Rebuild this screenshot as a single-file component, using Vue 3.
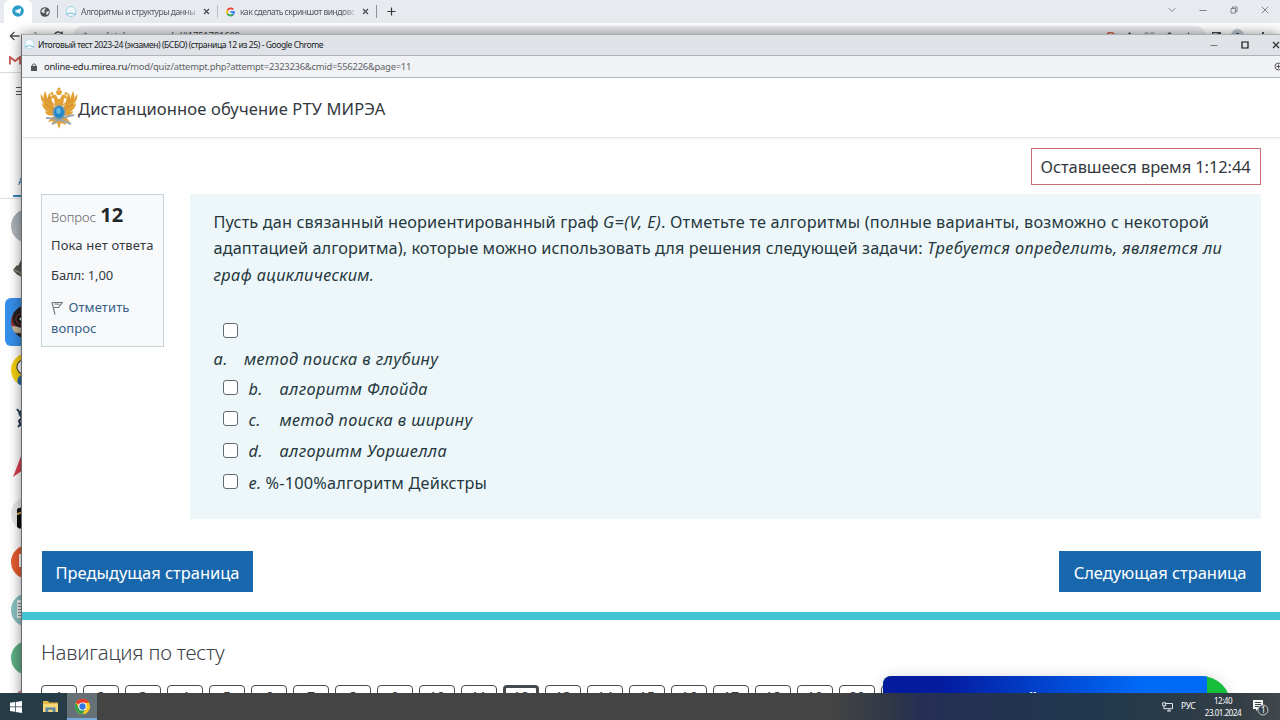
<script setup>
const answers = [
  { key: 'b.', text: 'алгоритм Флойда' },
  { key: 'c.', text: 'метод поиска в ширину' },
  { key: 'd.', text: 'алгоритм Уоршелла' },
]
const pages = Array.from({ length: 21 }, (_, i) => i + 1)
</script>

<template>
  <div class="screen">
    <div class="browser">
      <div class="tabs">
        <div class="tab-active">
          <svg width="12" height="12" viewBox="0 0 12 12"><circle cx="6" cy="6" r="5.8" fill="#2c9cc9" /><path d="M2.3 6l6.8-2.7L8 9 5.8 7.4 4.8 8.5 4.5 6.9z" fill="#fff" /></svg>
        </div>
        <svg class="globe" width="10" height="10" viewBox="0 0 10 10"><circle cx="5" cy="5" r="4.8" fill="#505356" /><path d="M2 3l2-1.8 1.8.6L5 3.3l-1.2.5L5 5l-1 1.4L1 4.6zM6.2 4.8l2.5-.9.3 1.7L7.3 8l-1-.4z" fill="#dfe2e6" /></svg>
        <i class="sep s1"></i>
        <svg class="fav" width="12" height="12" viewBox="0 0 12 12"><circle cx="6" cy="5.5" r="5" fill="#f0f7fb" stroke="#9ed2e6" /><path d="M1 8.5q5-3 10 .3" fill="none" stroke="#71b9d7" /></svg>
        <span class="tab-text t1">Алгоритмы и структуры данны</span>
        <svg class="x" width="7" height="7" viewBox="0 0 7 7"><path d="M1 1l5 5M6 1L1 6" stroke="#46494d" stroke-width="1.2" /></svg>
        <i class="sep s2"></i>
        <svg class="google" width="9" height="10" viewBox="0 0 18 18"><g fill="none" stroke-width="3.6"><path d="M14.5 4A7 7 0 0 0 3 5.6" stroke="#ea4335" /><path d="M3 5.6A7 7 0 0 0 3 12.4" stroke="#fbbc05" /><path d="M3 12.4A7 7 0 0 0 14 14" stroke="#34a853" /><path d="M14 14A7 7 0 0 0 16 9H9" stroke="#4285f4" /></g></svg>
        <span class="tab-text t2">как сделать скриншот виндовс</span>
        <svg class="x" width="7" height="7" viewBox="0 0 7 7"><path d="M1 1l5 5M6 1L1 6" stroke="#46494d" stroke-width="1.2" /></svg>
        <i class="sep s3"></i>
        <svg class="plus" width="9" height="9" viewBox="0 0 9 9"><path d="M4.5 .5v8M.5 4.5h8" stroke="#35383b" stroke-width="1.2" /></svg>
        <div class="back-controls">
          <svg width="8" height="8" viewBox="0 0 8 8"><path d="M.7 2.2L4 5.5l3.3-3.3" /></svg>
          <svg width="8" height="8" viewBox="0 0 8 8"><path d="M.5 4.5h7" /></svg>
          <svg width="8" height="8" viewBox="0 0 8 8"><path d="M1 2.5h4.5V7H1zM2.5 2.5V1H7v4.5H5.5" /></svg>
          <svg width="8" height="8" viewBox="0 0 8 8"><path d="M.8 .8l6.4 6.4M7.2 .8L.8 7.2" /></svg>
        </div>
      </div>
      <div class="toolbar">
        <svg class="back" width="11" height="10" viewBox="0 0 11 10"><path d="M10.5 5H1.4M5.4 1L1.3 5l4.1 4" fill="none" stroke="#4b4e52" stroke-width="1.3" /></svg>
        <svg class="forward" width="11" height="10" viewBox="0 0 11 10"><path d="M0 5h9.6M5.4 1l4.1 4-4.1 4" fill="none" stroke="#94979a" stroke-width="1.2" /></svg>
        <svg class="reload" width="10" height="10" viewBox="0 0 10 10"><path d="M9 3.5A4 4 0 1 0 9 6.5M9.2 .5v3.3H6" fill="none" stroke="#4b4e52" stroke-width="1.4" /></svg>
        <div class="omnibox"><svg width="7" height="9" viewBox="0 0 7 9"><path d="M1 4h5v4H1zM2 4V2q1.5-2 3 0v2" fill="none" stroke="#5f6368" /></svg><span>web.telegram.org/a/#1751781600</span></div>
        <div class="extensions">
          <svg width="9" height="9" viewBox="0 0 9 9"><path d="M8 2.5A4 4 0 1 0 8 6.5" fill="none" stroke="#d35e42" stroke-width="1.6" /></svg>
          <svg width="9" height="9" viewBox="0 0 9 9"><path d="M4.5 0L8 4H6v4H3V4H1z" fill="#4c4f53" /></svg>
          <svg width="11" height="9" viewBox="0 0 11 9"><path d="M1 1h3v3H1zM6 1h4v2M6 5h4v3" fill="none" stroke="#8e9194" /></svg>
          <svg width="9" height="9" viewBox="0 0 9 9"><path d="M4.5 0L9 4H7v4H2V4H0z" fill="#4c4f53" /></svg>
          <svg width="9" height="9" viewBox="0 0 9 9"><path d="M4.5 0l1.3 3H9L6.5 5l1 3-3-2-3 2 1-3L0 3h3z" fill="#54575b" /></svg>
          <svg class="panel" width="9" height="9" viewBox="0 0 9 9"><path d="M.7 .7h7.6v6H.7zM6 1v6M7 1v6" fill="none" stroke="#414449" stroke-width="1.3" /></svg>
          <b class="avatar"></b>
          <b class="dots"></b>
        </div>
      </div>
      <svg class="gmail" width="12" height="9" viewBox="0 0 12 9"><path d="M1 8.5V1l5 4 5-4v7.5" fill="none" stroke="#c7574d" stroke-width="1.8" /></svg>
      <div class="bookmark-line"></div>
      <div class="menu-icon"></div>
      <div class="folder">А</div>
      <div class="chats">
        <div class="chat"><i class="face gray"></i></div>
        <div class="chat"><svg class="hat" width="32" height="26" viewBox="0 0 32 26"><path d="M2 13l4-5 1 1 3-6q6-5 12 0l9 12-14 8-4 2-2-5Q5 18 2 13z" fill="#57584d" /><path d="M3 13q6 1 9 6" stroke="#aaa994" fill="none" /></svg></div>
        <div class="chat selected"><i class="face helmet"></i></div>
        <div class="chat"><i class="face yellow"></i></div>
        <div class="chat"><svg width="30" height="34" viewBox="0 0 30 34"><path d="M6 8l3 4 2-3M8 12l3 5-3 3 2 5M7 26l4-5" fill="none" stroke="#253b57" stroke-width="2" /></svg></div>
        <div class="chat"><svg width="30" height="34" viewBox="0 0 30 34"><path d="M2 28L12 2l12 24-12-5z" fill="#d94152" /></svg></div>
        <div class="chat"><i class="face black"></i></div>
        <div class="chat"><i class="face orange"><b></b></i></div>
        <div class="chat"><i class="face teal"><b></b></i></div>
        <div class="chat"><i class="face green"></i></div>
        <div class="chat"><i class="face pink"></i></div>
      </div>
    </div>

    <section class="window">
      <div class="titlebar">
        <svg width="11" height="11" viewBox="0 0 12 12"><circle cx="6" cy="5.5" r="5" fill="#f5fbff" stroke="#b1dceb" /><path d="M1 8.5q5-3 10 .3" fill="none" stroke="#71b9d7" /></svg>
        <span>Итоговый тест 2023-24 (экзамен) (БСБО) (страница 12 из 25) - Google Chrome</span>
        <div class="controls">
          <svg width="8" height="8" viewBox="0 0 8 8"><path d="M.5 4.5h7" stroke="#777" /></svg>
          <svg width="8" height="8" viewBox="0 0 8 8"><path d="M1 1h6v6H1z" fill="none" stroke="#111" stroke-width="1.2" /></svg>
          <svg width="8" height="8" viewBox="0 0 8 8"><path d="M1 1l6 6M7 1L1 7" stroke="#333" stroke-width="1.3" /></svg>
        </div>
      </div>
      <div class="address">
        <svg width="6" height="8" viewBox="0 0 6 8"><path d="M0 3h6v5H0z" fill="#515458" /><path d="M1.2 3V2q1.8-2.6 3.6 0v1" fill="none" stroke="#515458" /></svg>
        <span><b>online-edu.mirea.ru</b>/mod/quiz/attempt.php?attempt=2323236&amp;cmid=556226&amp;page=11</span>
        <svg class="zoom" width="9" height="9" viewBox="0 0 9 9"><circle cx="4.5" cy="4.5" r="3.5" fill="none" stroke="#555" /><path d="M2.5 4.5h4M4.5 2.5v4" stroke="#555" /></svg>
      </div>
      <header>
        <svg class="eagle" width="38" height="42" viewBox="0 0 38 42">
          <g fill="#e4a236">
            <path d="M14 21v7C8 30 5 26 5 24l3 1C3 22 2 18 2 16l3 2C1 14 0 9 1 7l3 5C3 9 4 6 5 4l3 8c0-3 0-5 2-6l2 9 3 5zM24 21v7c6 2 9-2 9-4l-3 1c5-3 6-7 6-9l-3 2c4-4 5-9 4-11l-3 5c1-3 0-6-1-8l-3 8c0-3 0-5-2-6l-2 9-3 5z" />
            <path d="M11 12q0-5 5-4l2 4h2l2-4q5-1 5 4l-3-1-1 8h-8l-1-8zM16 5l1-2 2 1 2-1 1 2-1 3h-4z" />
            <circle cx="19" cy="2" r="1.6" /><circle cx="12" cy="6.5" r="1.5" /><circle cx="26" cy="6.5" r="1.5" />
            <path d="M12 30l-4 5 5-1-1 4 5-2 2 6 2-6 5 2-1-4 5 1-4-5z" />
          </g>
          <path d="M4 11l9 7M5 17l8 5M34 11l-9 7M33 17l-8 5M8 10l7 8M30 10l-7 8" stroke="#c98327" stroke-width=".7" />
          <path d="M6 31q12 0 25 6M34 28q-12 2-22 9" fill="none" stroke="#9aa3aa" stroke-width="2" />
          <ellipse cx="19" cy="25.5" rx="6.6" ry="7.6" fill="#8f999a" /><ellipse cx="19" cy="25.3" rx="5" ry="6.1" fill="#2389c9" />
          <ellipse cx="18.5" cy="24" rx="2.2" ry="3" fill="#66b9e2" />
        </svg>
        <h1>Дистанционное обучение РТУ МИРЭА</h1>
      </header>
      <main>
        <div class="timer"><span>Оставшееся время 1:12:44</span></div>
        <div class="question">
          <aside>
            <div class="qno">Вопрос <b>12</b></div>
            <div class="state">Пока нет ответа</div>
            <div class="grade">Балл: 1,00</div>
            <div class="flag"><svg width="13" height="14" viewBox="0 0 13 14"><path d="M1 1.5l3 12M1.2 1.5h10L7.5 6.5H3M3.5 3l5 .2" fill="none" stroke="#6d7379" stroke-width="1.1" /></svg> <span>Отметить<br></span><span>вопрос</span></div>
          </aside>
          <article>
            <p>
              <span>Пусть дан связанный неориентированный граф <em>G=(V, E)</em>.<span class="wide"> Отметьте те алгоритмы (полные варианты, возможно с некоторой</span></span><br>
              <span class="second">адаптацией алгоритма), которые можно использовать для решения следующей задачи: <em>Требуется определить, является ли</em></span><br>
              <em>граф ациклическим.</em>
            </p>
            <div class="first-box"><i class="check"></i></div>
            <div class="first-label"><em class="letter">a.</em><em>метод поиска в глубину</em></div>
            <div v-for="a in answers" :key="a.key" class="answer"><i class="check"></i><em class="letter">{{ a.key }}</em><em>{{ a.text }}</em></div>
            <div class="answer last"><i class="check"></i><em>e.</em><span>%-100%алгоритм Дейкстры</span></div>
          </article>
        </div>
        <div class="buttons"><button class="prev">Предыдущая страница</button><button class="next">Следующая страница</button></div>
      </main>
      <div class="stripe"></div>
      <nav>
        <h2>Навигация по тесту</h2>
        <div class="pages"><span v-for="n in pages" :key="n" :class="{ current: n === 12 }">{{ n }}</span></div>
      </nav>
    </section>

    <div class="banner"><div class="banner-blue">Й</div></div>

    <footer>
      <div class="start"><svg width="12" height="12" viewBox="0 0 12 12"><path d="M0 1.8l5-.7v4.5H0zM5.7 1L12 0v5.6H5.7zM0 6.3h5v4.5l-5-.7zM5.7 6.3H12V12l-6.3-1z" fill="#fff" /></svg></div>
      <div class="explorer"><svg width="15" height="13" viewBox="0 0 15 13"><path d="M0 1h5l1 1.5h9V12H0z" fill="#e2b94a" /><path d="M0 4h15v8H0z" fill="#f5d777" /><path d="M2.5 12V7.5h10V12h-2.8V9.7H5.3V12z" fill="#5a86a5" /></svg></div>
      <div class="chrome"><svg width="17" height="17" viewBox="0 0 20 20"><circle cx="10" cy="10" r="9" fill="#fbc927" /><path d="M10 10L2.2 5.5A9 9 0 0 1 17.8 5.5H10z" fill="#e53a2c" /><path d="M2.2 5.5A9 9 0 0 0 10 19l4-7-4 2-4-2z" fill="#3a9e4e" /><circle cx="10" cy="10" r="4.8" fill="#fff" /><circle cx="10" cy="10" r="3.7" fill="#3176e4" /></svg></div>
      <div class="tray">
        <svg class="net" width="12" height="10" viewBox="0 0 12 10"><path d="M3.5 1.5h7v5.2H2.3M5 9h4M7 7v2M.7 .8h3v3h-3zM2 4v3" fill="none" stroke="#e5e8ea" /></svg>
        <span class="lang">РУС</span>
        <div class="clock"><span>12:40</span><span>23.01.2024</span></div>
        <div class="notice"><svg width="18" height="17" viewBox="0 0 18 17"><path d="M1 1h10v9H6l-2 2v-2H1z" fill="#f4f5f5" /><path d="M3 3.5h6M3 5.5h6M3 7.5h4" stroke="#38424a" /><circle cx="11" cy="11" r="5" fill="#38424a" stroke="#c3c6c9" /></svg><b>1</b></div>
      </div>
    </footer>
  </div>
</template>

<style>
html, body { margin: 0; overflow: hidden; }
</style>
<style scoped>
* { box-sizing: border-box; }
.screen { position: relative; width: 1280px; height: 720px; overflow: hidden; background: #fff; font-family: "Noto Sans", sans-serif; color: #33393e; }
svg { display: block; flex: none; }
.browser { height: 720px; }
.tabs { height: 23px; display: flex; align-items: center; background: #e7eaee; }
.tab-active { width: 28px; height: 23px; margin-left: 4px; padding: 5px 0 0 8px; background: #fff; border-radius: 6px 6px 0 0; }
.globe { margin-left: 8px; }
.sep { width: 1px; height: 13px; background: #8e9296; }
.s1 { margin-left: 7px; }
.fav { margin-left: 7px; }
.tab-text { flex: none; font-size: 8.6px; line-height: 14px; white-space: nowrap; color: #55595d; mask-image: linear-gradient(90deg, #000 90%, #0004); }
.t1 { width: 116px; margin-left: 4px; letter-spacing: -.52px; }
.t2 { width: 114px; margin-left: 5px; letter-spacing: -.52px; }
.x { margin-left: 6px; }
.t2 + .x { margin-left: 8px; }
.s2 { margin-left: 7px; background: #bbbfc3; }
.google { margin-left: 8px; }
.s3 { margin-left: 7px; }
.plus { margin-left: 10px; }
.back-controls { margin-left: auto; display: flex; gap: 23px; padding: 0 11px 4px 0; }
.back-controls path { fill: none; stroke: #75797c; stroke-width: .9; }
.toolbar { height: 27px; display: flex; padding-top: 2px; background: #fff; }
.back { margin: 6px 0 0 9px; }
.forward { margin: 6px 0 0 9px; }
.reload { margin: 6px 0 0 13px; }
.omnibox { display: flex; width: 1133px; height: 22px; margin: 1px 0 0 10px; padding: 3px 9px; border-radius: 11px; background: #e9ebee; font-size: 9.5px; line-height: 13px; gap: 5px; color: #36393c; letter-spacing: -.22px; }
.omnibox svg { margin-top: 3px; }
.extensions { position: absolute; left: 1106px; top: 32px; display: flex; gap: 10px; }
.extensions .panel { margin-left: 9px; }
.avatar { width: 13px; height: 13px; margin-top: -3px; border-radius: 50%; background: radial-gradient(circle, #495968 25%, #b9c7d3 27%); }
.dots { width: 2px; height: 10px; margin-left: 8px; background: #4c4f53; }
.gmail { margin: 6px 0 0 9px; }
.bookmark-line { height: 1px; margin-top: 7px; background: #d8dadc; }
.menu-icon { width: 10px; height: 8px; margin: 14px 0 0 16px; border-top: 1px solid #555; border-bottom: 1px solid #555; background: linear-gradient(#555, #555) 0 2.5px / 10px 1px no-repeat; }
.folder { height: 24px; margin-top: 80px; padding-left: 18px; font-size: 10px; line-height: 13px; color: #2786bd; position: relative; border-bottom: 1px solid #dce0e3; }
.folder::after { content: ''; position: absolute; left: 13px; top: 20px; width: 20px; height: 2px; background: #3388b8; }
.chats { padding: 3px 0 0 5px; }
.chat { height: 48px; padding: 7px 0 0 6px; }
.selected { width: 40px; background: #358ee9; border-radius: 6px; }
.face { display: block; width: 34px; height: 34px; border-radius: 50%; overflow: hidden; }
.gray { background: linear-gradient(#a1acb4, #b3bac0); }
.helmet { background: radial-gradient(circle at 10px 14px, #ddd 0 1px, #151618 2px 4px, #8c3734 5px, #241f20 6px 8px, transparent 9px), linear-gradient(#241f20 0 25%, #8f302d 30% 60%, #c4b69b 65% 80%, #2a2624 85%); }
.yellow { background: radial-gradient(circle at 13px 28px, #216bad 0 6px, transparent 7px), radial-gradient(circle at 13px 14px, #fff 0 6px, #333 7px, transparent 8px), #f4cf12; }
.black { background: linear-gradient(160deg, transparent 25%, #171717 26% 34%, #c59b4a 35% 39%, #080808 40% 70%, transparent 71%) 6px 0 no-repeat, #e8e9eb; }
.orange { background: #e75b31; padding: 9px 0 0 8px; }
.orange b { display: block; width: 14px; height: 13px; border: 2px solid #fff; }
.teal { background: #8ac2c2; padding: 7px 0 0 6px; }
.teal b { display: block; width: 15px; height: 18px; background: repeating-linear-gradient(#eee 0 2px, #688b92 2px 3px); border: 1px solid #eee; }
.green { background: #5eaf85; }
.pink { background: #dc7190; }
.window { position: absolute; left: 21px; top: 34px; width: 1259px; height: 686px; background: #fff; border-left: 1px solid #666a6d; border-top: 1px solid #a9adb0; box-shadow: 0 0 12px #0007; overflow: hidden; }
.titlebar { height: 21px; display: flex; align-items: center; background: #dfe2e7; border-bottom: 1px solid #aeb3b5; padding: 0 0 1px 2px; }
.titlebar span { margin-left: 3px; font-size: 8.6px; letter-spacing: -.46px; white-space: nowrap; color: #202225; }
.controls { margin-left: auto; display: flex; gap: 23px; margin-right: 0; }
.address { height: 22px; display: flex; align-items: center; background: #f0f2f5; border-bottom: 1px solid #b0b6b7; padding-left: 9px; }
.address span { margin-left: 7px; font-size: 9.4px; letter-spacing: -.23px; white-space: nowrap; color: #5f6367; }
.address b { font-weight: 400; color: #252729; }
.zoom { margin: 0 -3px 0 auto; }
header { height: 60px; display: flex; border-bottom: 1px solid #e4e6e7; box-shadow: 0 1px 2px #0001; }
.eagle { margin: 9px 0 0 18px; }
h1 { margin: 19px 0 0; font-size: 16.5px; line-height: 23px; font-weight: 400; white-space: nowrap; letter-spacing: .14px; }
main { height: 474px; padding: 10px 19px 0; }
.timer { width: 230px; height: 37px; margin-left: auto; border: 1px solid #c77075; padding: 6px 8.5px; line-height: 23px; font-size: 16.5px; letter-spacing: -.1px; white-space: nowrap; }
.question { display: flex; margin-top: 9px; gap: 26px; }
aside { width: 123px; height: 153px; border: 1px solid #c6d0d7; background: #f8f9fb; padding: 8px 9px; font-size: 13px; white-space: nowrap; }
.qno { height: 32px; line-height: 24px; color: #62676c; font-weight: 300; }
.qno b { font-size: 20px; font-weight: 700; color: #24272a; margin-left: 1px; }
.state { height: 31px; line-height: 20px; letter-spacing: .16px; }
.grade { height: 31px; line-height: 19px; letter-spacing: -.1px; }
.flag { color: #355f86; line-height: 21px; letter-spacing: .1px; }
.flag svg { display: inline-block; vertical-align: -3px; margin-right: 1px; }
article { width: 1071px; height: 325px; background: #edf7fa; padding: 15px 24px 0 23.5px; font-size: 16.3px; letter-spacing: .13px; color: #263840; white-space: nowrap; }
article em { letter-spacing: .4px; }
.wide { letter-spacing: .22px; }
.second { letter-spacing: .095px; }
.second em { letter-spacing: .46px; }
p { margin: 0; line-height: 26.4px; height: 80px; }
.first-box { height: 30px; margin-top: 26px; padding: 8px 0 0 9.5px; }
.check { display: block; flex: none; width: 15px; height: 15px; border: 1px solid #626a70; border-radius: 3px; background: #fff; }
.first-label { display: flex; height: 28px; line-height: 26px; align-items: center; }
.first-label .letter { width: 30.5px; }
.answer { display: flex; align-items: center; height: 31.3px; padding-left: 9.5px; }
.answer .check { margin-top: -2px; }
.answer .letter { width: 31px; }
.check + em { margin-left: 10.5px; }
.last span { margin-left: 4px; letter-spacing: .2px; }
.buttons { display: flex; justify-content: space-between; margin-top: 32px; }
button { height: 41px; padding: 1px 0 0; border: 0; background: #1867ac; color: #fff; font: 16.5px "Noto Sans", sans-serif; letter-spacing: -.03px; white-space: nowrap; }
.prev { width: 211px; margin-left: 1px; }
.next { width: 202px; }
.stripe { height: 8px; background: #40c4d3; }
nav { padding: 16px 19px; }
h2 { margin: 0; font-size: 20.4px; line-height: 32px; font-weight: 300; letter-spacing: -.2px; color: #3b4146; }
.pages { display: flex; gap: 6px; margin-top: 17px; }
.pages span { width: 36px; height: 40px; border: 1px solid #464b4f; border-radius: 4px; text-align: center; font-size: 14px; line-height: 21px; flex: none; }
.pages .current { border-width: 3px; line-height: 17px; }
.banner { position: absolute; left: 883px; top: 676px; width: 348px; height: 50px; border-radius: 8px 30px 0 0; background: #15bd3b; box-shadow: 0 0 14px #0002; overflow: hidden; }
.banner-blue { width: 324px; height: 50px; padding: 14px 0 0 144px; border-radius: 0 0 20px 0; background: linear-gradient(90deg, #041ba0 0 18%, #006af8 80%); color: #fff; font-size: 15px; font-weight: 700; line-height: 18px; }
footer { position: absolute; left: 0; top: 693px; width: 1280px; height: 27px; display: flex; background: linear-gradient(90deg, #263c47 0 66px, #444 100px 830px, #303746 890px, #252f54 920px, #20394d 1100px, #343e45 1240px, #41484b); color: #fff; }
.start { padding: 8px 0 0 10px; width: 42px; }
.explorer { padding: 7px 0 0 1px; width: 25px; }
.chrome { width: 30px; background: #667077; border-bottom: 2px solid #75a9d9; padding: 5px 0 0 7px; }
.tray { margin-left: auto; display: flex; }
.net { margin: 9px 7px 0 0; }
.lang { width: 24px; padding-top: 7px; font-size: 8.5px; line-height: 12px; letter-spacing: -.3px; }
.clock { display: flex; flex-direction: column; width: 36px; align-items: center; font-size: 8px; line-height: 12px; letter-spacing: -.45px; padding-top: 2px; white-space: nowrap; }
.notice { position: relative; margin: 6px 10px 0 11px; width: 18px; }
.notice b { position: absolute; left: 9px; top: 5px; font-size: 8px; line-height: 12px; font-weight: 400; }
</style>
